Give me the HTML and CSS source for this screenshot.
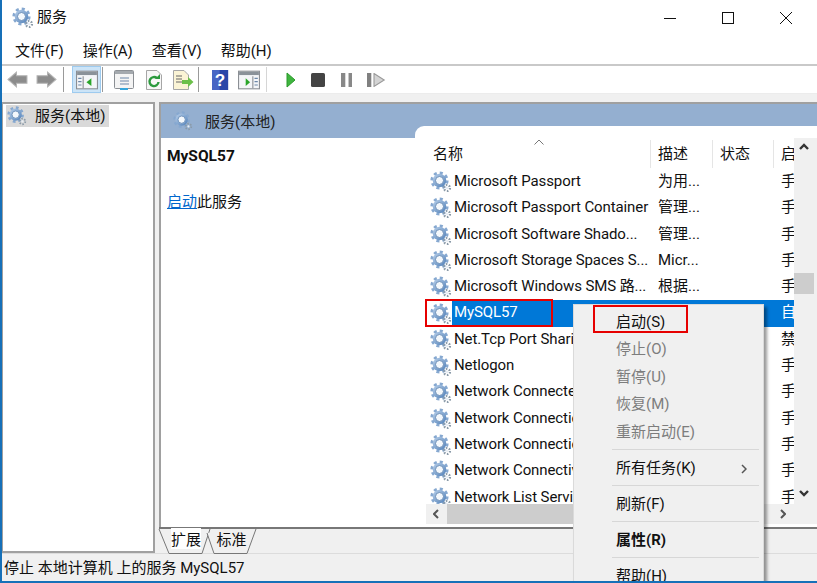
FILE: index.html
```html
<!DOCTYPE html>
<html lang="zh">
<head>
<meta charset="utf-8">
<title>服务</title>
<link rel="stylesheet" href="styles.css">
</head>
<body>
<svg class="defs" width="0" height="0" aria-hidden="true">
  <defs>
    <linearGradient id="gearFill" x1="0" y1="0" x2="1" y2="1">
      <stop offset="0" stop-color="#b9d0ea"/>
      <stop offset="1" stop-color="#4f7fb8"/>
    </linearGradient>
    <symbol id="gear" viewBox="0 0 22 22">
      <circle cx="9.500" cy="9.500" r="7.600" fill="none" stroke="#86a8d0" stroke-width="3" stroke-dasharray="3 2.970"/>
      <circle cx="9.500" cy="9.500" r="6.800" fill="url(#gearFill)"/>
      <circle cx="9.500" cy="9.500" r="4" fill="#f4f8fc" stroke="#6c8fb8" stroke-width="1"/>
      <circle cx="17" cy="17" r="3" fill="none" stroke="#8a9aa8" stroke-width="2.200" stroke-dasharray="1.600 1.540"/>
      <circle cx="17" cy="17" r="1.200" fill="#e8eef4"/>
    </symbol>
  </defs>
</svg>
<div class="window">
  <header class="titlebar">
    <svg class="gear"><use href="#gear"/></svg>
    <span class="title">服务</span>
    <div class="controls">
      <svg class="ctl" viewBox="0 0 12 12"><path d="M0 6.500H12" stroke="#111" fill="none"/></svg>
      <svg class="ctl" viewBox="0 0 12 12"><rect x=".5" y=".5" width="11" height="11" stroke="#111" fill="none"/></svg>
      <svg class="ctl" viewBox="0 0 12 12"><path d="M0 0L12 12M12 0L0 12" stroke="#111" fill="none"/></svg>
    </div>
  </header>
  <nav class="menubar">
    <span>文件(F)</span><span>操作(A)</span><span>查看(V)</span><span>帮助(H)</span>
  </nav>
  <div class="toolbar">
    <span class="tb tb-back"><svg class="ico-arrow" viewBox="0 0 20 16"><path d="M1 8L9 1V4.500H19V11.500H9V15Z" fill="#8c8c8c" stroke="#b4b4b4"/></svg></span>
    <span class="tb tb-fwd"><svg class="ico-arrow" viewBox="0 0 20 16"><path d="M19 8L11 1V4.500H1V11.500H11V15Z" fill="#8c8c8c" stroke="#b4b4b4"/></svg></span>
    <i class="sep sep-a"></i>
    <span class="tb active"><svg class="ico-big" viewBox="0 0 20 17"><rect x=".5" y=".5" width="19" height="16" fill="#f4f6f8" stroke="#8b8f94"/><rect x="1" y="1" width="18" height="3" fill="#8a9299"/><path d="M6.500 5V16" stroke="#8b8f94"/><path d="M2 7H5M2 10H5M2 13H5" stroke="#6c87a8"/><path d="M14 7V14L9.500 10.500Z" fill="#2aa52a"/></svg></span>
    <i class="sep sep-b"></i>
    <span class="tb tb-shift"><svg class="ico-big" viewBox="0 0 20 20"><rect x=".5" y=".5" width="19" height="18" rx="1" fill="#f4f4f4" stroke="#8b8f94"/><rect x="1" y="1" width="18" height="3" fill="#a4a9ae"/><path d="M6 8H15M6 11H15M6 14H15" stroke="#6c87a8"/><rect x="6" y="18" width="8" height="2" fill="#35a5dc"/></svg></span>
    <span class="tb tb-nudge"><svg class="ico-big" viewBox="0 0 18 20"><path d="M1.500 .5H12L16.500 5V19.500H1.500Z" fill="#f7f7f7" stroke="#a6a6a6"/><path d="M12 8.200A4.500 4.500 0 1 0 13.500 12" fill="none" stroke="#2c9a3e" stroke-width="2.400"/><path d="M10 9L15 9V4Z" fill="#2c9a3e"/></svg></span>
    <span class="tb"><svg class="ico-big" viewBox="0 0 22 20"><path d="M1.500 .5H12L16.500 5V19.500H1.500Z" fill="#fbf4d5" stroke="#a6a6a6"/><path d="M4 6H10M4 9H10M4 12H10" stroke="#666"/><path d="M10 10H16V7L21.500 12L16 17V14H10Z" fill="#6cc04a"/></svg></span>
    <i class="sep sep-c"></i>
    <span class="tb tb-shift"><svg class="ico-big" viewBox="0 0 17 21"><rect width="17" height="21" fill="#2b46a8"/><rect width="8" height="21" fill="#4766c4"/><text x="8.500" y="17" class="qm">?</text></svg></span>
    <span class="tb"><svg class="ico-big" viewBox="0 0 20 17"><rect x=".5" y=".5" width="19" height="16" fill="#f4f6f8" stroke="#8b8f94"/><rect x="1" y="1" width="18" height="3" fill="#8a9299"/><path d="M13.500 5V16" stroke="#8b8f94"/><path d="M15 7H18M15 10H18M15 13H18" stroke="#6c87a8"/><path d="M7 7V14L11 10.500Z" fill="#2aa52a"/></svg></span>
    <i class="sep sep-d"></i>
    <span class="tb"><svg class="ico-play" viewBox="0 0 10 16"><path d="M1 1L9 8L1 15Z" fill="#3fb53f" stroke="#2a9a2a"/></svg></span>
    <span class="tb tb-stop"><svg class="ico-small" viewBox="0 0 13 13"><rect width="13" height="13" rx="1.500" fill="#444"/></svg></span>
    <span class="tb"><svg class="ico-small" viewBox="0 0 11 13"><rect width="4" height="13" fill="#888"/><rect x="7" width="4" height="13" fill="#888"/></svg></span>
    <span class="tb tb-next"><svg class="ico-small" viewBox="0 0 17 13"><rect width="4" height="13" fill="#808080"/><path d="M6.500 .5L16 6.500L6.500 12.500Z" fill="#d4d4d4" stroke="#999"/></svg></span>
  </div>
  <main class="panes">
    <aside class="tree">
      <div class="tree-item"><svg class="gear"><use href="#gear"/></svg><span>服务(本地)</span></div>
    </aside>
    <section class="content">
      <div class="content-main">
        <div class="detail">
          <div class="detail-head"><svg class="gear"><use href="#gear"/></svg><span>服务(本地)</span></div>
          <h1 class="detail-name">MySQL57</h1>
          <p class="detail-action"><a href="#">启动</a>此服务</p>
        </div>
        <div class="list-col">
          <div class="blue-strip"></div>
          <div class="list">
            <div class="list-main">
              <div class="list-body">
                <div class="cols head">
                  <div class="hcell">名称<svg class="caret" viewBox="0 0 10 6"><path d="M.5 5.500L5 1L9.500 5.500" fill="none" stroke="#777"/></svg></div>
                  <div class="hcell">描述</div>
                  <div class="hcell">状态</div>
                  <div class="hcell hlast">启</div>
                </div>
                <div class="rows">
                  <div class="cols row"><div class="name"><svg class="gear"><use href="#gear"/></svg><span class="label">Microsoft Passport</span></div><div class="cell">为用...</div><div class="cell"></div><div class="cell">手</div></div>
                  <div class="cols row"><div class="name"><svg class="gear"><use href="#gear"/></svg><span class="label">Microsoft Passport Container</span></div><div class="cell">管理...</div><div class="cell"></div><div class="cell">手</div></div>
                  <div class="cols row"><div class="name"><svg class="gear"><use href="#gear"/></svg><span class="label">Microsoft Software Shado...</span></div><div class="cell">管理...</div><div class="cell"></div><div class="cell">手</div></div>
                  <div class="cols row"><div class="name"><svg class="gear"><use href="#gear"/></svg><span class="label">Microsoft Storage Spaces S...</span></div><div class="cell">Micr...</div><div class="cell"></div><div class="cell">手</div></div>
                  <div class="cols row"><div class="name"><svg class="gear"><use href="#gear"/></svg><span class="label">Microsoft Windows SMS 路...</span></div><div class="cell">根据...</div><div class="cell"></div><div class="cell">手</div></div>
                  <div class="cols row sel"><div class="name"><svg class="gear"><use href="#gear"/></svg><span class="label">MySQL57</span></div><div class="cell"></div><div class="cell"></div><div class="cell">自</div></div>
                  <div class="cols row"><div class="name"><svg class="gear"><use href="#gear"/></svg><span class="label">Net.Tcp Port Sharing Service</span></div><div class="cell"></div><div class="cell"></div><div class="cell">禁</div></div>
                  <div class="cols row"><div class="name"><svg class="gear"><use href="#gear"/></svg><span class="label">Netlogon</span></div><div class="cell"></div><div class="cell"></div><div class="cell">手</div></div>
                  <div class="cols row"><div class="name"><svg class="gear"><use href="#gear"/></svg><span class="label">Network Connected Devices</span></div><div class="cell"></div><div class="cell"></div><div class="cell">手</div></div>
                  <div class="cols row"><div class="name"><svg class="gear"><use href="#gear"/></svg><span class="label">Network Connection Broker</span></div><div class="cell"></div><div class="cell"></div><div class="cell">手</div></div>
                  <div class="cols row"><div class="name"><svg class="gear"><use href="#gear"/></svg><span class="label">Network Connections</span></div><div class="cell"></div><div class="cell"></div><div class="cell">手</div></div>
                  <div class="cols row"><div class="name"><svg class="gear"><use href="#gear"/></svg><span class="label">Network Connectivity</span></div><div class="cell"></div><div class="cell"></div><div class="cell">手</div></div>
                  <div class="cols row"><div class="name"><svg class="gear"><use href="#gear"/></svg><span class="label">Network List Service</span></div><div class="cell"></div><div class="cell"></div><div class="cell">手</div></div>
                </div>
              </div>
              <div class="vscroll">
                <svg class="arrow" viewBox="0 0 10 6"><path d="M1 5L5 1L9 5" fill="none" stroke="#333" stroke-width="2.400"/></svg>
                <div class="vthumb"></div>
                <svg class="arrow" viewBox="0 0 10 6"><path d="M1 1L5 5L9 1" fill="none" stroke="#333" stroke-width="2.400"/></svg>
              </div>
            </div>
            <div class="hscroll">
              <svg class="harrow" viewBox="0 0 6 10"><path d="M5 1L1 5L5 9" fill="none" stroke="#555" stroke-width="2"/></svg>
              <div class="hthumb"></div>
              <svg class="harrow harrow-r" viewBox="0 0 6 10"><path d="M1 1L5 5L1 9" fill="none" stroke="#555" stroke-width="2"/></svg>
            </div>
          </div>
        </div>
      </div>
      <div class="tabs">
        <div class="tab tab-on"><svg class="tab-shape" viewBox="0 0 52 25"><path d="M0 0L10 24.500H43L51 0" fill="#f0f0f0" stroke="#777"/></svg><span>扩展</span></div>
        <div class="tab"><svg class="tab-shape" viewBox="0 0 52 25"><path d="M0 4L7 24.500H40L49 0" fill="#f0f0f0" stroke="#777"/></svg><span>标准</span></div>
      </div>
    </section>
  </main>
  <footer class="status">停止 本地计算机 上的服务 MySQL57</footer>

  <div class="redbox redbox-row"></div>
  <div class="ctx">
    <div class="mi">启动(S)</div>
    <div class="mi off">停止(O)</div>
    <div class="mi off">暂停(U)</div>
    <div class="mi off">恢复(M)</div>
    <div class="mi off">重新启动(E)</div>
    <hr class="msep">
    <div class="mi mi-sub">所有任务(K)<svg class="sub" viewBox="0 0 6 10"><path d="M1 1L5 5L1 9" fill="none" stroke="#555" stroke-width="1.500"/></svg></div>
    <hr class="msep">
    <div class="mi">刷新(F)</div>
    <hr class="msep">
    <div class="mi strong">属性(R)</div>
    <hr class="msep">
    <div class="mi">帮助(H)</div>
  </div>
  <div class="redbox redbox-menu"></div>
</div>
</body>
</html>
```

FILE: styles.css
```css
* { box-sizing: border-box; }
html, body { margin: 0; padding: 0; height: 100%; overflow: hidden; }
body {
  font-family: "Roboto", "Noto Sans CJK SC", sans-serif;
  font-size: 15px;
  color: #111;
  background: #fff;
}
.defs { position: absolute; }
.window {
  position: relative;
  width: 817px;
  height: 583px;
  display: flex;
  flex-direction: column;
  border-left: 2px solid #1670b8;
  border-bottom: 2px solid #1670b8;
  overflow: hidden;
  background: #f0f0f0;
}
.gear { width: 22px; height: 22px; flex: none; }

.titlebar {
  height: 35px;
  flex: none;
  display: flex;
  align-items: center;
  background: #fff;
  padding-left: 10px;
}
.title { margin-left: 3px; line-height: 35px; }
.controls { margin-left: auto; display: flex; align-items: center; padding-right: 25px; gap: 46px; }
.ctl { width: 12px; height: 12px; display: block; }

.menubar {
  height: 31px;
  flex: none;
  display: flex;
  gap: 19px;
  padding-left: 13px;
  align-items: center;
  background: #fff;
  border-bottom: 2px solid #c9c9c9;
}

.toolbar {
  height: 28px;
  flex: none;
  display: flex;
  align-items: center;
  padding-left: 2px;
  background: #fff;
  border-bottom: 1px solid #ececec;
}
.tb { width: 29px; height: 27px; display: flex; align-items: center; justify-content: center; flex: none; }
.tb svg { display: block; }
.tb-back { margin-left: -1px; }
.tb-fwd { margin-right: 1px; }
.tb-shift { margin-left: 1px; margin-right: -1px; }
.tb-stop { margin-left: -2px; }
.tb-next { margin-left: 1px; }
.ico-arrow { width: 21px; height: 19px; }
.ico-big { height: 20px; max-width: 22px; }
.ico-small { height: 14px; }
.ico-play { height: 18px; width: 10px; }
.tb-nudge { margin-left: 2px; }
.active { background: #cce4f7; border: 1px solid #9ecbef; }
.sep { width: 1px; height: 25px; background: #9a9a9a; flex: none; }
.sep-a { margin: 0 8px 0 1px; }
.sep-b { margin: 0 5px 0 1px; }
.sep-c { margin: 0 6px 0 1px; }
.sep-d { margin: 0 9px 0 3px; background: #d6d6d6; }
.qm { font: 700 18px "Liberation Sans", sans-serif; fill: #fff; text-anchor: middle; }

.panes { flex: 1; min-height: 0; display: flex; padding-top: 8px; }
.tree {
  width: 153px;
  background: #fff;
  border: 2px solid #a0a0a0;
  border-left: 1px solid #a0a0a0;
  padding: 1px 0 0 3px;
}
.tree-item {
  width: 103px;
  height: 22px;
  display: flex;
  align-items: center;
  gap: 8px;
  background: #d9d9d9;
  white-space: nowrap;
  padding-left: 1px;
  line-height: 20px;
}
.tree-item span { margin-bottom: 1px; }
.tree-item .gear { width: 20px; height: 20px; }

.content { margin-left: 4px; flex: 1; min-width: 0; display: flex; flex-direction: column; }
.content-main {
  flex: 1;
  min-height: 0;
  display: flex;
  background: #fff;
  border-top: 2px solid #a0a0a0;
  border-left: 2px solid #a0a0a0;
}
.detail { width: 254px; flex: none; }
.detail-head {
  height: 34px;
  background: #94afd0;
  display: flex;
  align-items: center;
  padding-left: 12px;
  gap: 12px;
  color: #222;
}
.detail-head span { margin-bottom: 2px; }
.detail-head .gear { width: 20px; height: 20px; }
.detail-name { margin: 7px 0 0 6px; font-size: 15.5px; font-weight: 700; line-height: 22px; }
.detail-action { margin: 24px 0 0 6px; line-height: 22px; }
.detail-action a { color: #0066cc; }

.list-col { flex: 1; min-width: 0; display: flex; flex-direction: column; background: #94afd0; }
.blue-strip { height: 22px; flex: none; }
.list {
  flex: 1;
  min-height: 0;
  background: #fff;
  border-top-left-radius: 9px;
  display: flex;
  flex-direction: column;
  padding: 0 0 3px 11px;
}
.list-main { flex: 1; min-height: 0; display: flex; }
.list-body { flex: 1; min-width: 0; overflow: hidden; display: flex; flex-direction: column; }
.cols { display: grid; grid-template-columns: 225px 62px 61px 1fr; }
.head { height: 43px; flex: none; padding-top: 14px; line-height: 28px; }
.hcell { position: relative; padding-left: 7px; border-right: 1px solid #e5e5e5; height: 28px; }
.hlast { border-right: 0; }
.caret { position: absolute; left: 108px; top: -1px; width: 10px; height: 6px; }
.rows { flex: 1; min-height: 0; overflow: hidden; }
.row { height: 26.3px; line-height: 24.6px; white-space: nowrap; }
.name { display: flex; align-items: center; padding-left: 4px; overflow: hidden; }
.label { flex: 1; align-self: stretch; padding-left: 2px; overflow: hidden; letter-spacing: -.1px; }
.cell { padding-left: 7px; overflow: hidden; }
.sel .label, .sel .cell { background: #0078d7; color: #fff; }

.vscroll {
  width: 23px;
  flex: none;
  margin-top: 12px;
  background: #f0f0f0;
  display: flex;
  flex-direction: column;
  padding: 6px 0 8px 5px;
}
.arrow { display: block; width: 10px; height: 6px; flex: none; overflow: visible; }
.vthumb { width: 20px; height: 21px; margin: 123px 0 auto -5px; background: #cdcdcd; }

.hscroll { height: 20px; flex: none; background: #f0f0f0; display: flex; align-items: center; }
.harrow { width: 6px; height: 10px; margin-left: 7px; flex: none; }
.hthumb { width: 160px; height: 20px; margin-left: 8px; background: #cdcdcd; }
.harrow-r { margin: 0 31px 0 auto; }

.tabs { height: 26px; flex: none; display: flex; border-top: 2px solid #777; }
.tab { position: relative; width: 48px; height: 24px; display: flex; align-items: center; justify-content: center; flex: none; padding: 0 0 5px 6px; }
.tab + .tab { width: 49px; padding-left: 0; }
.tab span { position: relative; }
.tab-on span { background: #fff; }
.tab-shape { position: absolute; left: 0; top: 0; width: 52px; height: 25px; overflow: visible; }

.status {
  height: 28px;
  flex: none;
  line-height: 28px;
  padding-left: 2px;
  border-top: 1px solid #dcdcdc;
  white-space: nowrap;
}

.ctx {
  position: absolute;
  left: 571px;
  top: 304px;
  width: 191px;
  height: 300px;
  background: #f0f0f0;
  border: 1px solid #dadada;
  box-shadow: 3px 3px 3px rgba(0, 0, 0, .4);
  padding: 4px 4px 0 38px;
}
.mi { height: 27.4px; line-height: 27.4px; padding-left: 4px; white-space: nowrap; position: relative; }
.off { color: #7d7d7d; }
.strong { font-weight: 700; }
.mi-sub { display: flex; align-items: center; }
.sub { width: 6px; height: 10px; position: absolute; right: 12px; top: 9px; }
.msep { border: 0; border-top: 1px solid #d7d7d7; margin: 3px 0 4.6px; height: 0; }

.redbox { position: absolute; border: 2px solid #e60000; pointer-events: none; }
.redbox-row { left: 423px; top: 299px; width: 128px; height: 28px; }
.redbox-menu { left: 591px; top: 305px; width: 95px; height: 28px; }
```
